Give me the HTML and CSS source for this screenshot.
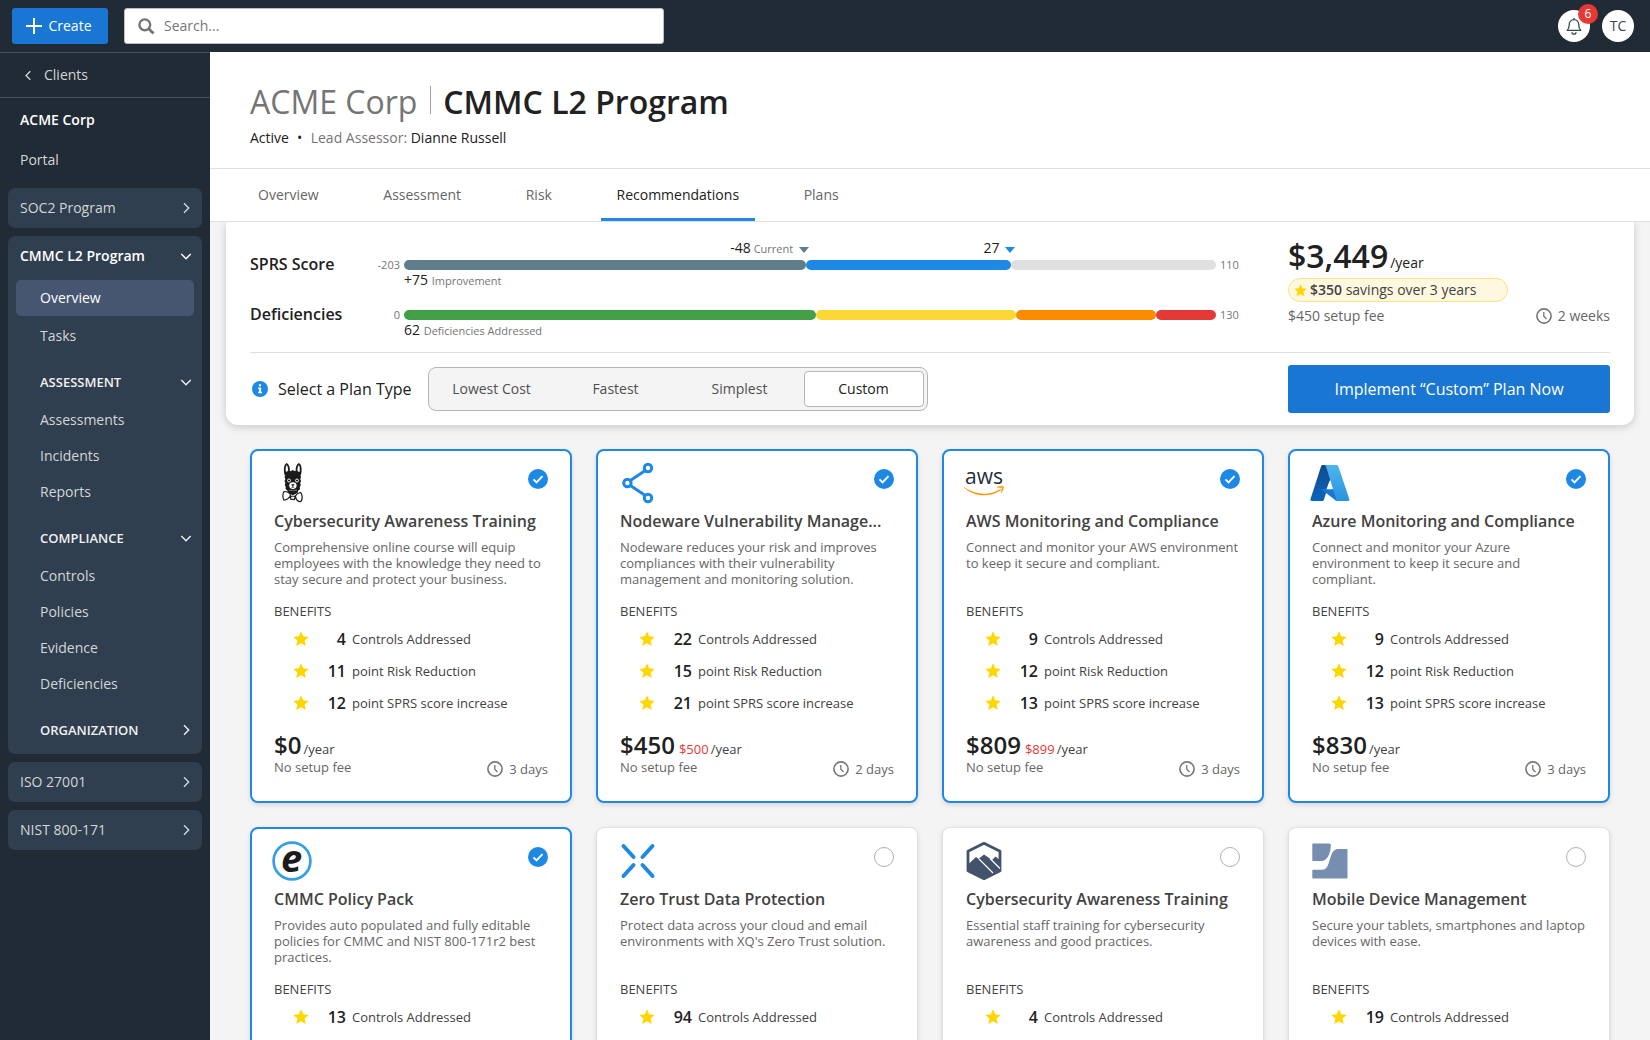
FILE: index.html
```html
<!DOCTYPE html>
<html lang="en">
<head>
<meta charset="UTF-8">
<meta name="viewport" content="width=device-width, initial-scale=1.0">
<title>CMMC L2 Program - Recommendations</title>
<link rel="stylesheet" href="styles.css">
</head>
<body>

<!-- shared icons -->
<svg class="sprite" width="0" height="0">
  <symbol id="star" viewBox="0 0 16 16"><path d="M8 .3l2.2 5 5.5.6-4.1 3.7 1.2 5.4L8 12.2 3.2 15l1.2-5.4L.3 5.9l5.5-.6z" fill="#ffd600"/></symbol>
  <symbol id="clock" viewBox="0 0 16 16"><circle cx="8" cy="8" r="7.1" fill="none" stroke="#757575" stroke-width="1.6"/><path d="M7.8 4v4.3l2.7 2.7" fill="none" stroke="#757575" stroke-width="1.3"/></symbol>
  <symbol id="check" viewBox="0 0 20 20"><circle cx="10" cy="10" r="10" fill="#1e88e5"/><path d="M5.5 10.3l3 3 6-6.2" fill="none" stroke="#fff" stroke-width="1.9"/></symbol>
  <symbol id="right" viewBox="0 0 12 12"><path d="M4 1.3L8.7 6 4 10.7" fill="none" stroke="currentColor" stroke-width="1.4"/></symbol>
  <symbol id="down" viewBox="0 0 12 12"><path d="M1.3 4L6 8.7 10.7 4" fill="none" stroke="currentColor" stroke-width="1.4"/></symbol>
</svg>

<header class="topbar">
  <button class="create">
    <svg width="16" height="16" viewBox="0 0 16 16"><path d="M8 0v16M0 8h16" stroke="#fff" stroke-width="2"/></svg>
    Create
  </button>
  <div class="search">
    <svg width="17" height="17" viewBox="0 0 17 17"><circle cx="6.8" cy="6.8" r="5.4" fill="none" stroke="#757575" stroke-width="2.4"/><path d="M10.8 10.8l4.7 4.7" stroke="#757575" stroke-width="2.8"/></svg>
    <span>Search...</span>
  </div>
  <div class="user">
    <div class="circle">
      <svg width="18" height="18" viewBox="0 0 18 18" fill="none" stroke="#37474f" stroke-width="1.3"><path d="M9 1v1.6M2.2 13.4c1.4-1.4 2-2.6 2-5.4 0-3.2 2-5.4 4.8-5.4s4.8 2.2 4.8 5.4c0 2.8.6 4 2 5.4z" stroke-linejoin="round"/><path d="M7 15.2a2 2 0 0 0 4 0"/></svg>
      <span class="badge">6</span>
    </div>
    <div class="circle">TC</div>
  </div>
</header>

<div class="layout">
  <nav class="sidebar">
    <a class="back"><svg width="11" height="11"><use href="#right"/></svg>Clients</a>
    <a class="client">ACME Corp</a>
    <a class="portal">Portal</a>
    <div class="group"><a class="head">SOC2 Program<svg><use href="#right"/></svg></a></div>
    <div class="group open">
      <a class="head">CMMC L2 Program<svg><use href="#down"/></svg></a>
      <a class="item active">Overview</a>
      <a class="item">Tasks</a>
      <a class="section">ASSESSMENT<svg><use href="#down"/></svg></a>
      <a class="item">Assessments</a>
      <a class="item">Incidents</a>
      <a class="item">Reports</a>
      <a class="section">COMPLIANCE<svg><use href="#down"/></svg></a>
      <a class="item">Controls</a>
      <a class="item">Policies</a>
      <a class="item">Evidence</a>
      <a class="item">Deficiencies</a>
      <a class="section">ORGANIZATION<svg><use href="#right"/></svg></a>
    </div>
    <div class="group"><a class="head">ISO 27001<svg><use href="#right"/></svg></a></div>
    <div class="group"><a class="head">NIST 800-171<svg><use href="#right"/></svg></a></div>
  </nav>

  <main class="main">
    <div class="page-header">
      <h1><span class="org">ACME Corp</span><span class="name">CMMC L2 Program</span></h1>
      <p>Active<span class="dot">•</span><span class="muted">Lead Assessor:</span> Dianne Russell</p>
    </div>
    <div class="tabs">
      <a>Overview</a>
      <a>Assessment</a>
      <a>Risk</a>
      <a class="active">Recommendations</a>
      <a>Plans</a>
    </div>

    <div class="content">
      <section class="panel">
        <div class="summary">
          <div class="metrics">
            <div class="metric">
              <div class="markers">
                <span class="marker current" style="right: 50.1%">-48 <small>Current</small></span>
                <span class="marker goal" style="right: 24.7%">27</span>
              </div>
              <b>SPRS Score</b>
              <span class="min">-203</span>
              <div class="bar">
                <i class="slate" style="width: 49.5%"></i><i class="blue" style="width: 25.25%"></i><i class="grey" style="width: 25.25%"></i>
              </div>
              <span class="max">110</span>
              <div class="note">+75 <small>Improvement</small></div>
            </div>
            <div class="metric">
              <div class="markers"></div>
              <b>Deficiencies</b>
              <span class="min">0</span>
              <div class="bar">
                <i class="green" style="width: 50.75%"></i><i class="yellow" style="width: 24.63%"></i><i class="orange" style="width: 17.24%"></i><i class="red" style="width: 7.38%"></i>
              </div>
              <span class="max">130</span>
              <div class="note">62 <small>Deficiencies Addressed</small></div>
            </div>
          </div>
          <div class="total">
            <div class="total-price"><b>$3,449</b>/year</div>
            <div class="savings"><svg width="13" height="13"><use href="#star"/></svg><span><b>$350</b> savings over 3 years</span></div>
            <div class="total-row"><span>$450 setup fee</span><span class="time"><svg width="16" height="16"><use href="#clock"/></svg>2 weeks</span></div>
          </div>
        </div>
        <div class="plan">
          <svg width="16" height="16" viewBox="0 0 16 16"><circle cx="8" cy="8" r="8" fill="#1e88e5"/><path d="M6.9 3.2h2.2v2.1H6.9zM6.2 6.5h2.9v4.3h.9v1.5H6.2v-1.5h.9V8h-.9z" fill="#fff"/></svg>
          <span class="plan-label">Select a Plan Type</span>
          <div class="segmented">
            <button>Lowest Cost</button>
            <button>Fastest</button>
            <button>Simplest</button>
            <button class="active">Custom</button>
          </div>
          <button class="implement">Implement “Custom” Plan Now</button>
        </div>
      </section>

      <section class="cards">
        <article class="card selected">
          <div class="card-top">
            <svg class="logo" viewBox="0 0 40 40">
              <path d="M13.5 12C12.2 7 12.6 2 14.6 1c1.8 1 2.6 4.5 2.4 8.5M24.5 9.500c-.2-4 .6-7.500 2.400-8.500 2 1 2.400 6 1.100 11" fill="#fff" stroke="#1b1b1b" stroke-width="1.8"/>
              <path d="M13 9l2-.5 1.500-1 2 .8 2.300-1.300 2.200 1.200 2-.7 1.500 1.200 2.300.3-.6 3 .9 2-.9 2 .9 2-.9 2 .6 2-1 2 .3 2-1.800 1.500-.5 2-2.500 1.500-2.500 1.300-2.500-1.300-2.500-1.500-.5-2-1.800-1.500.3-2-1-2 .6-2-.9-2 .9-2-.9-2 .9-2z" fill="#1b1b1b"/>
              <circle cx="17" cy="17.500" r="1.500" stroke="#fff" stroke-width=".9" fill="#1b1b1b"/><circle cx="25" cy="17.500" r="1.500" stroke="#fff" stroke-width=".9" fill="#1b1b1b"/>
              <ellipse cx="20.900" cy="22.600" rx="3.700" ry="3.400" fill="#fff"/>
              <path d="M19.600 21.500h2.600l-1.300 1.500zM20.900 23v1l-1.500 1M20.900 24l1.500 1" fill="#1b1b1b" stroke="#1b1b1b" stroke-width=".6"/>
              <path d="M17.500 27.300h7" stroke="#fff" stroke-width=".8" stroke-dasharray="1 1"/>
              <path d="M12 28.500c2.500 0 5.500 1.300 6.500 3.500-.2 2.500-4 5-6.500 5.200-1.500-2.500-1.500-6.500 0-8.700zM23.500 33c1-2.300 3-3.300 5.200-3.500 1.500 2.500 1.800 6.500.3 9-2.500.3-5.500-1.200-5.500-5.500zM18.500 33l4.800.2-1 3.400-3.500-.5z" fill="#fff" stroke="#1b1b1b" stroke-width="1.200"/>
            </svg>
            <svg width="20" height="20"><use href="#check"/></svg>
          </div>
          <h2>Cybersecurity Awareness Training</h2>
          <p>Comprehensive online course will equip employees with the knowledge they need to stay secure and protect your business.</p>
          <h3>BENEFITS</h3>
          <ul>
            <li><svg><use href="#star"/></svg><b>4</b>Controls Addressed</li>
            <li><svg><use href="#star"/></svg><b>11</b>point Risk Reduction</li>
            <li><svg><use href="#star"/></svg><b>12</b>point SPRS score increase</li>
          </ul>
          <div class="card-foot">
            <div><div class="price"><b>$0</b>/year</div>No setup fee</div>
            <span class="time"><svg width="16" height="16"><use href="#clock"/></svg>3 days</span>
          </div>
        </article>

        <article class="card selected">
          <div class="card-top">
            <svg class="logo" viewBox="0 0 40 40" fill="none" stroke="#1e88e5" stroke-width="3"><path d="M27.300 7.400L12 17.800M12 22.200l15.300 10.400"/><circle cx="30" cy="5" r="3.700"/><circle cx="9.400" cy="20" r="3.700"/><circle cx="30" cy="35" r="3.700"/></svg>
            <svg width="20" height="20"><use href="#check"/></svg>
          </div>
          <h2>Nodeware Vulnerability Manage...</h2>
          <p>Nodeware reduces your risk and improves compliances with their vulnerability management and monitoring solution.</p>
          <h3>BENEFITS</h3>
          <ul>
            <li><svg><use href="#star"/></svg><b>22</b>Controls Addressed</li>
            <li><svg><use href="#star"/></svg><b>15</b>point Risk Reduction</li>
            <li><svg><use href="#star"/></svg><b>21</b>point SPRS score increase</li>
          </ul>
          <div class="card-foot">
            <div><div class="price"><b>$450</b><span class="old">$500</span>/year</div>No setup fee</div>
            <span class="time"><svg width="16" height="16"><use href="#clock"/></svg>2 days</span>
          </div>
        </article>

        <article class="card selected">
          <div class="card-top">
            <svg class="logo" viewBox="0 0 40 40"><text class="aws" x="1" y="20.5" textLength="38" lengthAdjust="spacingAndGlyphs">aws</text><path d="M0 24c11 8 26 9 36.500 2l.8 1C27 34.500 10 34.500 0 24.600z" fill="#ff9800"/><path d="M33 24.300c2-1.200 5-1.400 6.300-.7.300 1.900-.6 4.800-2.300 6.200.8-1.800 1.200-3.800.9-4.700-.8-.6-2.800-.6-4.900-.8z" fill="#ff9800" stroke="#ff9800" stroke-width=".5"/></svg>
            <svg width="20" height="20"><use href="#check"/></svg>
          </div>
          <h2>AWS Monitoring and Compliance</h2>
          <p>Connect and monitor your AWS environment to keep it secure and compliant.</p>
          <h3>BENEFITS</h3>
          <ul>
            <li><svg><use href="#star"/></svg><b>9</b>Controls Addressed</li>
            <li><svg><use href="#star"/></svg><b>12</b>point Risk Reduction</li>
            <li><svg><use href="#star"/></svg><b>13</b>point SPRS score increase</li>
          </ul>
          <div class="card-foot">
            <div><div class="price"><b>$809</b><span class="old">$899</span>/year</div>No setup fee</div>
            <span class="time"><svg width="16" height="16"><use href="#clock"/></svg>3 days</span>
          </div>
        </article>

        <article class="card selected">
          <div class="card-top">
            <svg class="logo" viewBox="0 0 40 40">
              <defs>
                <linearGradient id="az1" x1="0" y1="0" x2="0" y2="1"><stop offset="0" stop-color="#114a8b"/><stop offset="1" stop-color="#0a66bd"/></linearGradient>
                <linearGradient id="az2" x1="0" y1="0" x2="0" y2="1"><stop offset="0" stop-color="#4fb5ee"/><stop offset="1" stop-color="#2892df"/></linearGradient>
              </defs>
              <path d="M12.700 2h12L14 36.500c-.3 1-.9 1.500-1.800 1.500H2c-1.300 0-1.900-.8-1.500-2L11 3.500c.3-.9.800-1.500 1.700-1.500z" fill="url(#az1)"/>
              <path d="M10.700 26H28l6 11.800h-7.800z" fill="#1976d2"/>
              <path d="M14.300 2H26.500c.9 0 1.600.6 1.900 1.500L39.300 36c.4 1.200-.2 2-1.500 2H24.500c1.300 0 2-.9 1.600-2L16 3.500c-.3-.9-.9-1.500-1.700-1.500z" fill="url(#az2)"/>
              <path d="M19.500 18l3.200 8.300h-6.200z" fill="#fff"/>
            </svg>
            <svg width="20" height="20"><use href="#check"/></svg>
          </div>
          <h2>Azure Monitoring and Compliance</h2>
          <p>Connect and monitor your Azure environment to keep it secure and compliant.</p>
          <h3>BENEFITS</h3>
          <ul>
            <li><svg><use href="#star"/></svg><b>9</b>Controls Addressed</li>
            <li><svg><use href="#star"/></svg><b>12</b>point Risk Reduction</li>
            <li><svg><use href="#star"/></svg><b>13</b>point SPRS score increase</li>
          </ul>
          <div class="card-foot">
            <div><div class="price"><b>$830</b>/year</div>No setup fee</div>
            <span class="time"><svg width="16" height="16"><use href="#clock"/></svg>3 days</span>
          </div>
        </article>

        <article class="card selected">
          <div class="card-top">
            <svg class="logo" viewBox="0 0 40 40"><circle cx="20" cy="20" r="18.400" fill="#fff" stroke="#389fe3" stroke-width="2.700"/><text class="e" x="19.500" y="30.500" text-anchor="middle">e</text></svg>
            <svg width="20" height="20"><use href="#check"/></svg>
          </div>
          <h2>CMMC Policy Pack</h2>
          <p>Provides auto populated and fully editable policies for CMMC and NIST 800-171r2 best practices.</p>
          <h3>BENEFITS</h3>
          <ul>
            <li><svg><use href="#star"/></svg><b>13</b>Controls Addressed</li>
          </ul>
        </article>

        <article class="card">
          <div class="card-top">
            <svg class="logo" viewBox="0 0 40 40" stroke="#1e88e5" stroke-width="4" stroke-linecap="round"><path d="M5.500 5l10 11M34.500 5L24.500 16M5.500 35l10-11M34.500 35l-10-11"/></svg>
            <span class="radio"></span>
          </div>
          <h2>Zero Trust Data Protection</h2>
          <p>Protect data across your cloud and email environments with XQ's Zero Trust solution.</p>
          <h3>BENEFITS</h3>
          <ul>
            <li><svg><use href="#star"/></svg><b>94</b>Controls Addressed</li>
          </ul>
        </article>

        <article class="card">
          <div class="card-top">
            <svg class="logo" viewBox="0 0 40 40">
              <path d="M20 2.300l16 8v19.400l-16 8-16-8V10.300z" fill="#fff" stroke="#43536b" stroke-width="2.800" stroke-linejoin="round"/>
              <path d="M3.500 24l8.500-8 2.500 2 5.500-4.500 8 5.500 3.500-3.500 5 4V30l-16.500 8.500L3.500 30z" fill="#43536b"/>
              <path d="M15 18l14 14M26 17.500l10 10" stroke="#fff" stroke-width="1.200"/>
            </svg>
            <span class="radio"></span>
          </div>
          <h2>Cybersecurity Awareness Training</h2>
          <p>Essential staff training for cybersecurity awareness and good practices.</p>
          <h3>BENEFITS</h3>
          <ul>
            <li><svg><use href="#star"/></svg><b>4</b>Controls Addressed</li>
          </ul>
        </article>

        <article class="card">
          <div class="card-top">
            <svg class="logo" viewBox="0 0 40 40" fill="#778eb1"><path d="M3.500 2.500H19c1.300 0 1.900.8 1.800 2-.2 8-3.300 15.500-9.800 15.500H3.500c-.8 0-1.200-.4-1.200-1.200v-15c0-.9.400-1.300 1.200-1.300z"/><path d="M36.300 8c.9 0 1.200.4 1.200 1.200v27c0 .9-.3 1.300-1.200 1.300H3.500c-.8 0-1.200-.4-1.200-1.300V30c0-.8.400-1.200 1.200-1.200h8.700c9.500 0 5.800-20.800 15.800-20.800z"/></svg>
            <span class="radio"></span>
          </div>
          <h2>Mobile Device Management</h2>
          <p>Secure your tablets, smartphones and laptop devices with ease.</p>
          <h3>BENEFITS</h3>
          <ul>
            <li><svg><use href="#star"/></svg><b>19</b>Controls Addressed</li>
          </ul>
        </article>
      </section>
    </div>
  </main>
</div>

</body>
</html>
```
FILE: styles.css
```css
* {
  box-sizing: border-box;
}
body {
  margin: 0;
  height: 100vh;
  overflow: hidden;
  display: flex;
  flex-direction: column;
  font-family: "Open Sans", sans-serif;
  font-size: 14px;
  line-height: 20px;
  color: #212121;
  background: #f4f4f4;
}
h1, h2, h3, p, ul {
  margin: 0;
  padding: 0;
}
b {
  font-weight: 600;
}
button {
  font: inherit;
  border: 0;
  padding: 0;
}
svg {
  flex: none;
}
.sprite {
  position: absolute;
}

/* top bar */
.topbar {
  flex: none;
  height: 52px;
  padding: 0 16px 0 12px;
  display: flex;
  align-items: center;
  background: #212b35;
}
.create {
  width: 96px;
  height: 36px;
  padding-right: 2px;
  display: flex;
  align-items: center;
  justify-content: center;
  gap: 6px;
  color: #fff;
  background: #1976d2;
  border-radius: 3px;
}
.search {
  width: 540px;
  height: 36px;
  margin-left: 16px;
  padding-left: 13px;
  display: flex;
  align-items: center;
  gap: 9px;
  color: #757575;
  background: #fff;
  border: 1px solid #bdbdbd;
  border-radius: 3px;
}
.user {
  margin-left: auto;
  display: flex;
  gap: 12px;
}
.circle {
  position: relative;
  width: 32px;
  height: 32px;
  display: flex;
  align-items: center;
  justify-content: center;
  color: #37474f;
  background: #fff;
  border-radius: 50%;
}
.badge {
  position: absolute;
  top: -6px;
  right: -8px;
  width: 20px;
  height: 20px;
  font-size: 12px;
  text-align: center;
  color: #fff;
  background: #e53935;
  border-radius: 50%;
}

.layout {
  flex: 1;
  min-height: 0;
  display: flex;
}

/* sidebar */
.sidebar {
  flex: none;
  width: 210px;
  color: #d3d5d7;
  background: #212b35;
  border-top: 1px solid #48515a;
}
.sidebar a {
  display: flex;
  align-items: center;
}
.sidebar .back {
  height: 45px;
  padding-left: 23px;
  gap: 10px;
  border-bottom: 1px solid #48515a;
}
.back svg {
  transform: rotate(180deg);
}
.sidebar .client {
  height: 40px;
  margin-top: 2px;
  padding-left: 20px;
  font-weight: 600;
  color: #fff;
}
.sidebar .portal {
  height: 40px;
  padding-left: 20px;
}
.group {
  margin: 8px 8px 0;
  padding: 0 8px;
  background: #303f4f;
  border-radius: 7px;
}
.head, .section {
  justify-content: space-between;
}
.head svg, .section svg {
  width: 12px;
  height: 12px;
  margin-right: 2px;
}
.head {
  height: 40px;
  padding-left: 4px;
}
.group.open {
  padding-bottom: 4px;
}
.open .head {
  margin-bottom: 4px;
  font-weight: 600;
  color: #fff;
}
.section {
  height: 36px;
  margin: 10px 0 2px;
  padding-left: 24px;
  font-size: 13px;
  font-weight: 600;
  color: #f0f0f0;
}
.item {
  height: 36px;
  padding-left: 24px;
}
.item.active {
  margin-bottom: 2px;
  color: #fff;
  background: #465670;
  border-radius: 5px;
}

/* page header */
.main {
  flex: 1;
  min-width: 0;
  display: flex;
  flex-direction: column;
}
.page-header {
  height: 117px;
  padding: 28px 40px 0;
  background: #fff;
  border-bottom: 1px solid #e0e0e0;
}
h1 {
  display: flex;
  align-items: center;
  font-size: 32px;
  line-height: 44px;
  font-weight: 600;
  margin-bottom: 4px;
}
.org {
  font-weight: 400;
  color: #757575;
}
.name::before {
  content: "";
  display: inline-block;
  width: 1px;
  height: 28px;
  margin: 0 12px 0 13px;
  background: #9e9e9e;
}
.dot {
  margin: 0 8.5px 0 8px;
}
.muted {
  color: #757575;
}
.tabs {
  height: 53px;
  padding-left: 32px;
  display: flex;
  gap: 32.6px;
  line-height: 52px;
  background: #fff;
  border-bottom: 1px solid #e0e0e0;
}
.tabs a {
  padding: 0 16px;
  color: #666;
}
.tabs .active {
  color: #212121;
  font-weight: 500;
  border-bottom: 3px solid #1e88e5;
}

/* summary panel */
.content {
  flex: 1;
  min-height: 0;
  overflow: hidden;
}
.panel {
  margin: 0 16px;
  padding: 0 24px;
  background: #fff;
  border-radius: 0 0 12px 12px;
  box-shadow: 0 2px 8px rgba(0, 0, 0, .18);
}
.summary {
  height: 131px;
  display: flex;
  justify-content: space-between;
  border-bottom: 1px solid #e0e0e0;
}
.metrics {
  padding-top: 16px;
}
.metric {
  display: grid;
  grid-template-columns: 100px 46px 812px auto;
  grid-template-rows: 20px 14px 16px;
  column-gap: 4px;
  align-items: center;
  line-height: 14px;
}
.metric b {
  grid-column: 1;
  margin-top: -2px;
  font-size: 16px;
  font-weight: 600;
}
.metric small, .min, .max {
  font-size: 11px;
  color: #757575;
}
.min {
  text-align: right;
}
.markers {
  position: relative;
  grid-column: 3;
  height: 20px;
}
.marker {
  position: absolute;
  display: flex;
  align-items: baseline;
  gap: 3px;
  line-height: 20px;
}
.marker::after {
  content: "";
  margin-left: 3px;
  border: 5px solid transparent;
  border-top: 6px solid #607d8b;
  border-bottom: 0;
}
.goal::after {
  border-top-color: #1e88e5;
}
.bar {
  display: flex;
}
.bar i {
  height: 10px;
  border-radius: 5px;
}
.slate { background: #607d8b; }
.blue { background: #1e88e5; }
.grey { background: #e0e0e0; }
.green { background: #43a047; }
.yellow { background: #fdd835; }
.orange { background: #fb8c00; }
.red { background: #e53935; }
.note {
  grid-column: 3;
  line-height: 16px;
}
.total {
  width: 322px;
  padding-top: 14px;
  color: #666;
}
.total-price {
  height: 40px;
  display: flex;
  align-items: baseline;
  gap: 2px;
  line-height: 40px;
  color: #212121;
}
.total-price b {
  font-size: 32px;
}
.savings {
  width: 220px;
  height: 24px;
  margin: 2px 0 4px;
  padding-left: 5px;
  display: flex;
  align-items: center;
  gap: 3px;
  color: #424242;
  background: #fff8e1;
  border: 1px solid #ffe082;
  border-radius: 12px;
}
.total-row {
  display: flex;
  justify-content: space-between;
}
.time {
  display: flex;
  align-items: center;
  gap: 6px;
}
.plan {
  height: 72px;
  display: flex;
  align-items: center;
  padding-left: 2px;
}
.plan-label {
  margin: 0 17px 0 10px;
  font-size: 16px;
}
.segmented {
  display: flex;
  gap: 4px;
  padding: 3px;
  background: #f4f4f4;
  border: 1px solid #b5b5b5;
  border-radius: 8px;
}
.segmented button {
  width: 120px;
  height: 36px;
  padding-right: 2px;
  color: #505050;
  background: none;
  border-radius: 4px;
}
.segmented .active {
  color: #212121;
  background: #fff;
  border: 1px solid #b5b5b5;
}
.implement {
  width: 322px;
  height: 48px;
  margin-left: auto;
  font-size: 16px;
  color: #fff;
  background: #1976d2;
  border-radius: 3px;
}

/* recommendation cards */
.cards {
  padding: 24px 40px;
  display: grid;
  grid-template-columns: repeat(4, 322px);
  grid-auto-rows: 354px;
  gap: 24px;
}
.card {
  padding: 13px 23px;
  font-size: 13px;
  line-height: 16px;
  color: #666;
  background: #fff;
  border: 1px solid #e0e0e0;
  border-radius: 8px;
  box-shadow: 0 2px 5px rgba(0, 0, 0, .12);
}
.card.selected {
  padding: 12px 22px;
  border: 2px solid #1e88e5;
}
.card-top {
  height: 40px;
  display: flex;
  justify-content: space-between;
}
.card-top svg, .radio {
  margin-top: 6px;
}
.card-top .logo {
  width: 40px;
  height: 40px;
  margin: 0 0 0 -2px;
  overflow: visible;
}
.radio {
  width: 20px;
  height: 20px;
  border: 1px solid #b0b0b0;
  border-radius: 50%;
}
.aws {
  font-size: 22.5px;
  font-weight: 500;
  fill: #252f3e;
}
.e {
  font-size: 38px;
  font-weight: 700;
  font-style: italic;
  fill: #1b1b1b;
}
.card h2 {
  margin-top: 6px;
  font-size: 16px;
  line-height: 24px;
  font-weight: 600;
  color: #424242;
}
.card p {
  height: 48px;
  margin: 6px 0 16px;
}
.card h3 {
  font-size: 13px;
  line-height: 16px;
  font-weight: 400;
  color: #424242;
}
.card ul {
  margin: 4px 0 9px;
  list-style: none;
}
.card li {
  height: 32px;
  padding-left: 18.5px;
  display: flex;
  align-items: center;
  color: #424242;
}
.card li svg {
  width: 16px;
  height: 16px;
}
.card li b {
  width: 37.5px;
  margin-right: 6px;
  text-align: right;
  font-size: 16px;
  color: #212121;
}
.card-foot {
  display: flex;
  justify-content: space-between;
}
.card-foot .time {
  height: 16px;
  margin-top: 33px;
}
.price {
  height: 31px;
  display: flex;
  align-items: baseline;
  line-height: 33px;
  color: #424242;
}
.price b {
  margin-right: 2px;
  font-size: 24px;
  color: #212121;
}
.old {
  margin: 0 2px;
  color: #e53935;
}
```
